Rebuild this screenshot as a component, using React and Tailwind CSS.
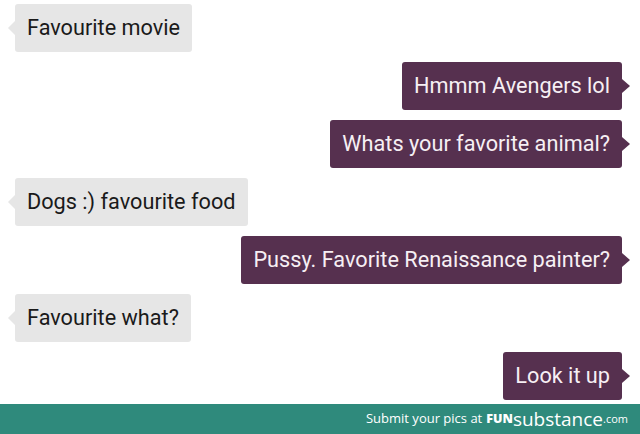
const messages = [
  { me: false, text: "Favourite movie" },
  { me: true, text: "Hmmm Avengers lol" },
  { me: true, text: "Whats your favorite animal?" },
  { me: false, text: "Dogs :) favourite food" },
  { me: true, text: "Pussy. Favorite Renaissance painter?" },
  { me: false, text: "Favourite what?" },
  { me: true, text: "Look it up" },
];

function Bubble({ me, text }) {
  if (me) {
    return (
      <div className="flex justify-end items-center">
        <div className="h-12 flex items-center px-3 rounded-[3px] bg-[#56304f] text-[#f6eff4] text-[21.7px]">
          {text}
        </div>
        <div className="w-0 h-0 border-y-[7px] border-y-transparent border-l-[8px] border-l-[#56304f]" />
      </div>
    );
  }
  return (
    <div className="flex items-center">
      <div className="w-0 h-0 border-y-[7px] border-y-transparent border-r-[7px] border-r-[#e6e6e6]" />
      <div className="h-12 flex items-center px-3 rounded-[3px] bg-[#e6e6e6] text-[#1a1a1a] text-[21.7px]">
        {text}
      </div>
    </div>
  );
}

export default function App() {
  return (
    <div className="w-[640px] h-[434px] bg-white flex flex-col overflow-hidden font-['Roboto',sans-serif]">
      <div className="flex-1 flex flex-col gap-[10px] pt-1 pl-2 pr-[10px]">
        {messages.map((m, i) => (
          <Bubble key={i} me={m.me} text={m.text} />
        ))}
      </div>
      <div className="h-[30px] bg-[#2f8a7c] flex items-center justify-end pr-[12px] text-white font-['Open_Sans',sans-serif]">
        <span className="text-[13px]">Submit your pics at</span>
        <span className="ml-[4px] text-[12.5px] font-extrabold leading-none">FUN</span>
        <span className="text-[19px] leading-none">substance</span>
        <span className="text-[11px]">.com</span>
      </div>
    </div>
  );
}
